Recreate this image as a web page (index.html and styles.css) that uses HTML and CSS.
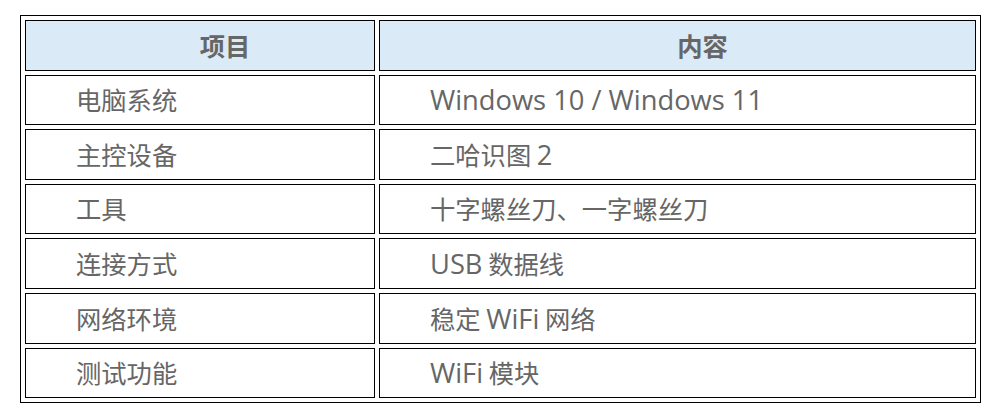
FILE: index.html
```html
<!DOCTYPE html>
<html lang="zh-CN">
<head>
<meta charset="utf-8">
<title>测试环境</title>
<link rel="stylesheet" href="styles.css">
</head>
<body>
<table class="spec">
  <thead>
    <tr><th class="c1">项目</th><th class="c2">内容</th></tr>
  </thead>
  <tbody>
    <tr><td>电脑系统</td><td><span class="lat">Windows 10 / Windows 11</span></td></tr>
    <tr><td>主控设备</td><td>二哈识图 <span class="lat">2</span></td></tr>
    <tr><td>工具</td><td>十字螺丝刀、一字螺丝刀</td></tr>
    <tr><td>连接方式</td><td><span class="lat">USB</span> 数据线</td></tr>
    <tr><td>网络环境</td><td>稳定 <span class="lat">WiFi</span> 网络</td></tr>
    <tr><td>测试功能</td><td><span class="lat">WiFi</span> 模块</td></tr>
  </tbody>
</table>
</body>
</html>
```

FILE: styles.css
```css
html, body {
  margin: 0;
  padding: 0;
  background: #ffffff;
}
body {
  padding: 15px 0 0 20px;
  font-family: "Noto Sans CJK SC", "Open Sans", sans-serif;
  color: #666666;
}
.spec {
  width: 961px;
  table-layout: fixed;
  border-collapse: separate;
  border-spacing: 4px;
  border: 1px solid #000000;
}
.spec th,
.spec td {
  box-sizing: border-box;
  height: 50.6px;
  border: 1px solid #000000;
  padding: 0 0 0 50px;
  font-size: 25.3px;
  line-height: 1;
  vertical-align: middle;
}
.spec th {
  background: #daeaf6;
  font-weight: bold;
  text-align: center;
  color: #666666;
}
.spec td {
  text-align: left;
  font-weight: normal;
}
.spec .c1 {
  width: 350px;
}
.lat {
  font-family: "Open Sans", "Noto Sans CJK SC", sans-serif;
  font-size: 27.3px;
  line-height: 1;
}
```
